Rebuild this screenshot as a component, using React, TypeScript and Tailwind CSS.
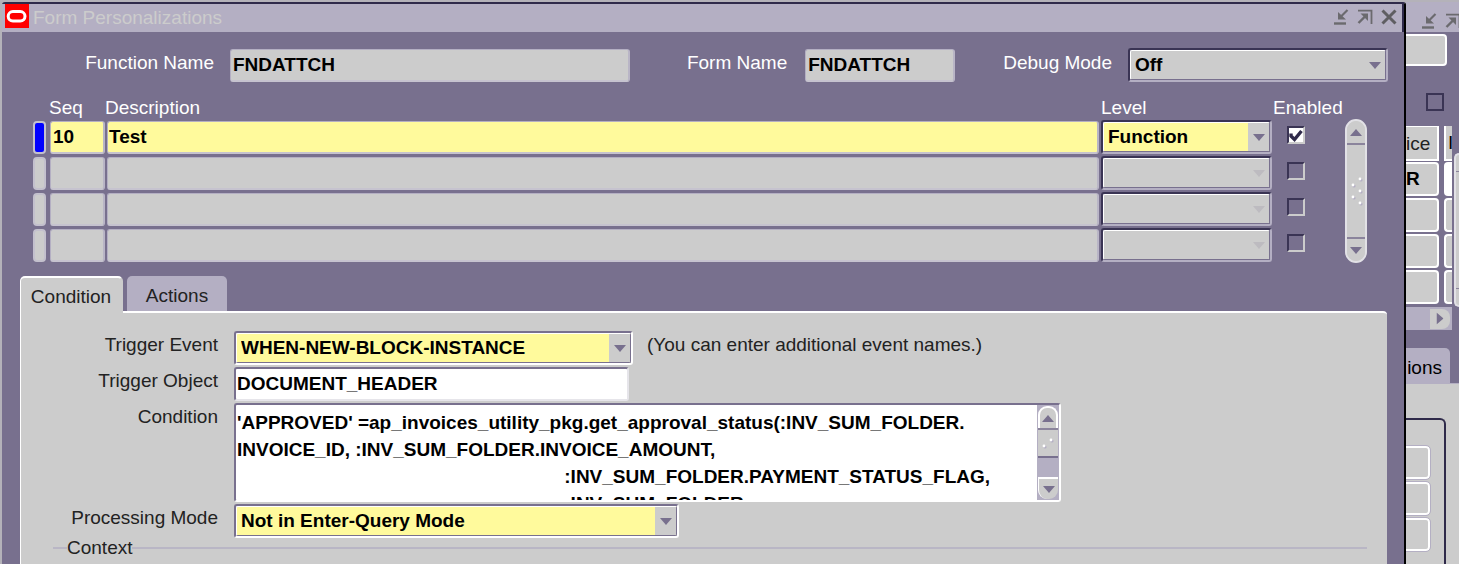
import { ReactNode } from 'react'
import clsx from 'clsx'

/* ─── Data ────────────────────────────────────────────────────────── */

const rules = [
    { seq: '10', description: 'Test', level: 'Function', enabled: true },
    { seq: '', description: '', level: '', enabled: false },
    { seq: '', description: '', level: '', enabled: false },
    { seq: '', description: '', level: '', enabled: false },
]

const indent = ' '.repeat(62)
const condition = [
    "'APPROVED' =ap_invoices_utility_pkg.get_approval_status(:INV_SUM_FOLDER.",
    'INVOICE_ID, :INV_SUM_FOLDER.INVOICE_AMOUNT,',
    `${indent}:INV_SUM_FOLDER.PAYMENT_STATUS_FLAG,`,
    `${indent}:INV_SUM_FOLDER.`,
].join('\n')

/* ─── Icons ───────────────────────────────────────────────────────── */

const OracleIcon = () => (
    <svg width={24} height={24} viewBox="0 0 24 24" className="flex-none" aria-hidden="true">
        <rect width="24" height="24" fill="#ff0000" />
        <rect x="3.2" y="7.6" width="16.8" height="9.4" rx="4.7" fill="none" stroke="#fff" strokeWidth={3} />
    </svg>
)
const MinimizeIcon = () => (
    <svg width={16} height={16} viewBox="0 0 16 16" fill="none" stroke="#6b6a6e" aria-hidden="true">
        <path d="M1 14.5h12" strokeWidth={2.4} /><path d="M14.5 1L7 8.5" strokeWidth={2.2} /><path d="M5 3v7.5h8z" fill="#6b6a6e" stroke="none" />
    </svg>
)
const RestoreIcon = () => (
    <svg width={16} height={16} viewBox="0 0 16 16" fill="none" stroke="#6b6a6e" aria-hidden="true">
        <path d="M1 1.7h13.5V15" strokeWidth={1.8} /><path d="M1.5 14L8 7.5" strokeWidth={2.4} /><path d="M3.5 4.5H11V12z" fill="#6b6a6e" stroke="none" />
    </svg>
)
const CloseIcon = () => (
    <svg width={16} height={16} viewBox="0 0 16 16" fill="none" stroke="#5f5e62" strokeWidth={3} aria-hidden="true">
        <path d="M1.5 1.5l13 13M14.5 1.5l-13 13" />
    </svg>
)
const Triangle = ({ className }: { className?: string }) => (
    <svg width={12} height={7} viewBox="0 0 12 7" className={className} fill="currentColor" aria-hidden="true">
        <path d="M0 0h12L6 7z" />
    </svg>
)
const Grip = ({ dots }: { dots: [number, number][] }) => (
    <svg width={16} height={32} viewBox="0 0 16 32" aria-hidden="true">
        {dots.map(([x, y]) => (
            <g key={`${x}-${y}`}>
                <circle cx={x + 1} cy={y + 1} r="1.6" fill="#b4afc3" />
                <circle cx={x} cy={y} r="1.4" fill="#fff" />
            </g>
        ))}
    </svg>
)

/* ─── Controls ────────────────────────────────────────────────────── */

const WindowButton = ({ label, children }: { label: string; children: ReactNode }) => (
    <button type="button" aria-label={label} className="flex-none">{children}</button>
)

type SelectProps = {
    id?: string
    label?: string
    value: string
    className: string
    filled?: boolean
    disabled?: boolean
    dark?: boolean
}

const Select = ({ id, label, value, className, filled, disabled, dark }: SelectProps) => (
    <div
        className={clsx(
            'relative h-[34px] rounded-[3px] border-2',
            dark ? 'border-t-[#3a3454] border-l-[#3a3454] border-b-[#b4afc3] border-r-[#b4afc3]' : 'border-t-[#78708e] border-l-[#78708e] border-b-white border-r-white',
            className,
        )}
    >
        <select
            id={id}
            aria-label={label}
            disabled={disabled}
            className={clsx(
                'block size-full appearance-none rounded-[2px] border border-t-white border-l-white border-b-[#78708e] border-r-[#78708e] pr-6 pl-1 font-bold text-black opacity-100',
                filled ? 'bg-[#fffa9c]' : 'bg-[#cccccc]',
            )}
        >
            <option>{value}</option>
        </select>
        <span className={clsx('pointer-events-none absolute inset-y-px right-px flex w-[21px] items-center justify-center bg-[#cccccc]', disabled ? 'text-[#bdbbc0]' : 'text-[#78708e]')}>
            <Triangle />
        </span>
    </div>
)

const Checkbox = ({ label, checked }: { label: string; checked: boolean }) => (
    <span className="relative block size-[18px]">
        <input
            type="checkbox"
            aria-label={label}
            defaultChecked={checked}
            className="peer block size-full appearance-none border-2 border-t-[#3a3454] border-l-[#3a3454] border-r-[#cccccc] border-b-[#cccccc] checked:bg-white"
        />
        <svg viewBox="0 0 18 18" className="pointer-events-none absolute inset-0 hidden peer-checked:block" fill="none" stroke="#2f2a4a" strokeWidth={3.4} aria-hidden="true">
            <path d="M4 7.5v2.5l3.5 3.5L14.5 5" />
        </svg>
    </span>
)

const readOnlyField = 'h-[33px] rounded-[3px] border border-t-[#b4afc3] border-l-[#b4afc3] border-r-2 border-b-2 border-r-[#b9b5c6] border-b-[#c6c3cf] font-bold text-black outline-none'

const ScrollCap = ({ down, className }: { down?: boolean; className: string }) => (
    <button
        type="button"
        aria-label={down ? 'Scroll down' : 'Scroll up'}
        className={clsx('flex h-[22px] flex-none items-center justify-center bg-[#cccccc] text-[#78708e]', className)}
    >
        <Triangle className={down ? '' : 'rotate-180'} />
    </button>
)

/* ─── Title bar ───────────────────────────────────────────────────── */

const TitleBar = () => (
    <header className="flex h-[28px] flex-none items-start border-r-2 border-r-[#2f2a4a] bg-[#b4afc3] pl-[3px]">
        <OracleIcon />
        <h1 className="flex-1 pl-1 leading-[27px] text-[#cccccc]">Form Personalizations</h1>
        <div className="flex gap-2 pt-[5px] pr-[5px]">
            <WindowButton label="Minimize"><MinimizeIcon /></WindowButton>
            <WindowButton label="Restore"><RestoreIcon /></WindowButton>
            <WindowButton label="Close"><CloseIcon /></WindowButton>
        </div>
    </header>
)

/* ─── Function details ────────────────────────────────────────────── */

const FunctionDetails = () => (
    <div className="flex flex-none pt-4 pr-4 text-white">
        <label htmlFor="function-name" className="w-[212px] flex-none pt-[3px] text-right">Function Name</label>
        <input id="function-name" readOnly value="FNDATTCH" className={clsx(readOnlyField, 'mt-px ml-4 w-[400px] bg-[#cccccc] pl-[2px]')} />
        <label htmlFor="form-name" className="ml-auto pt-[3px]">Form Name</label>
        <input id="form-name" readOnly value="FNDATTCH" className={clsx(readOnlyField, 'mt-px ml-[18px] w-[150px] bg-[#cccccc] pl-[2px]')} />
        <label htmlFor="debug-mode" className="ml-12 pt-[3px]">Debug Mode</label>
        <Select id="debug-mode" value="Off" dark className="ml-4 w-[260px]" />
    </div>
)

/* ─── Rules grid ──────────────────────────────────────────────────── */

const RulesGrid = () => (
    <div className="flex flex-none items-start pt-[14px] pl-[31px]">
        <table className="flex-1 table-fixed border-collapse">
            <colgroup>
                <col className="w-[16px]" />
                <col className="w-[56px]" />
                <col />
                <col className="w-[171px]" />
                <col className="w-[73px]" />
            </colgroup>
            <thead>
                <tr className="h-[23px] text-left text-white">
                    <td className="p-0" />
                    <th className="p-0 font-normal leading-[23px]">Seq</th>
                    <th className="p-0 font-normal leading-[23px]">Description</th>
                    <th className="p-0 font-normal leading-[23px]">Level</th>
                    <th className="p-0 pl-px font-normal leading-[23px]">Enabled</th>
                </tr>
            </thead>
            <tbody>
                {rules.map((rule, i) => {
                    const fill = rule.enabled ? 'bg-[#fffa9c]' : 'bg-[#cccccc]'
                    return (
                        <tr key={i} className="h-9">
                            <td className="p-0">
                                <button
                                    type="button"
                                    aria-label={`Select row ${i + 1}`}
                                    className={clsx('block h-[33px] w-[13px] rounded-[4px] border-2 border-[#c3c0cd]', rule.enabled ? 'bg-[#0000ff]' : 'bg-[#cccccc]')}
                                />
                            </td>
                            <td className="p-0">
                                <input aria-label="Seq" defaultValue={rule.seq} className={clsx(readOnlyField, fill, 'ml-px block w-[55px] pl-[2px]')} />
                            </td>
                            <td className="p-0 pr-[2px] pl-[2px]">
                                <input aria-label="Description" defaultValue={rule.description} className={clsx(readOnlyField, fill, 'block w-full pl-px')} />
                            </td>
                            <td className="p-0">
                                <Select label="Level" value={rule.level} filled={rule.enabled} disabled={!rule.enabled} dark className="w-full" />
                            </td>
                            <td className="p-0 pb-1 pl-[15px]">
                                <Checkbox label="Enabled" checked={rule.enabled} />
                            </td>
                        </tr>
                    )
                })}
            </tbody>
        </table>
        <div className="mt-[23px] mr-[37px] flex h-[144px] w-[22px] flex-none flex-col rounded-full border-2 border-[#e2e1e6] bg-[#cccccc]">
            <ScrollCap className="rounded-t-full" />
            <div className="flex flex-1 items-center justify-center border-y-2 border-t-[#8b849c] border-b-[#8b849c]">
                <Grip dots={[[12, 4], [5, 10], [12, 16], [5, 22], [12, 28]]} />
            </div>
            <ScrollCap down className="rounded-b-full" />
        </div>
    </div>
)

/* ─── Condition tab ───────────────────────────────────────────────── */

const FieldRow = ({ id, label, children }: { id: string; label: string; children: ReactNode }) => (
    <div className="flex">
        <label htmlFor={id} className="w-[197px] flex-none pt-[2px] text-right">{label}</label>
        <div className="ml-4 flex min-w-0 flex-1">{children}</div>
    </div>
)

const ConditionPanel = () => (
    <section className="mr-[17px] min-h-0 flex-1 rounded-tr-[4px] border-t-2 border-l border-white bg-[#cccccc] pt-[18px] text-[#222222]">
        <div className="flex flex-col gap-[2px]">
            <FieldRow id="trigger-event" label="Trigger Event">
                <Select id="trigger-event" value="WHEN-NEW-BLOCK-INSTANCE" filled className="w-[399px]" />
                <p className="ml-[14px] pt-[2px]">(You can enter additional event names.)</p>
            </FieldRow>
            <FieldRow id="trigger-object" label="Trigger Object">
                <input
                    id="trigger-object"
                    defaultValue="DOCUMENT_HEADER"
                    className="h-[34px] w-[395px] rounded-[3px] border-2 border-t-[#78708e] border-l-[#78708e] border-r-[#e6e5ea] border-b-[#e6e5ea] bg-white pl-px font-bold text-black"
                />
            </FieldRow>
            <FieldRow id="condition" label="Condition">
                <div className="flex h-[99px] w-[827px] rounded-[3px] border-2 border-t-[#78708e] border-l-[#78708e] border-r-white border-b-white bg-white">
                    <textarea
                        id="condition"
                        wrap="off"
                        defaultValue={condition}
                        className="block min-w-0 flex-1 resize-none overflow-hidden pt-[4px] pl-px leading-[27px] font-bold text-black outline-none"
                    />
                    <div className="flex w-[22px] flex-none flex-col bg-[#b4afc3] px-px py-px">
                        <ScrollCap className="rounded-t-[9px] border-2 border-b-0 border-white" />
                        <div className="h-[30px] overflow-hidden border-y-2 border-t-[#8b849c] border-b-[#78708e] bg-[#cccccc] pl-px">
                            <Grip dots={[[12, 10], [5, 16]]} />
                        </div>
                        <div className="flex-1" />
                        <ScrollCap down className="rounded-b-[9px] border-t-2 border-l border-white" />
                    </div>
                </div>
            </FieldRow>
            <FieldRow id="processing-mode" label="Processing Mode">
                <Select id="processing-mode" value="Not in Enter-Query Mode" filled className="w-[445px]" />
            </FieldRow>
        </div>
        <fieldset className="mr-5 ml-8 h-7 border-t-2 border-[#b9b6c5]">
            <legend className="ml-[14px] leading-5">Context</legend>
        </fieldset>
    </section>
)

const Tabs = () => (
    <div className="flex min-h-0 flex-1 flex-col pt-[13px] pl-[18px]">
        <nav className="flex flex-none text-[#222222]">
            <button type="button" className="relative -mb-[2px] h-[37px] w-[103px] rounded-t-[5px] border-2 border-b-0 border-l border-white border-r-[#cccccc] bg-[#cccccc] pt-[3px]">Condition</button>
            <button type="button" className="ml-1 h-[35px] w-[100px] rounded-t-[5px] bg-[#b4afc3] pt-[5px]">Actions</button>
        </nav>
        <ConditionPanel />
    </div>
)

/* ─── Window behind ───────────────────────────────────────────────── */

const BackgroundWindow = () => (
    <aside className="flex w-[53px] flex-none flex-col overflow-hidden border-t-2 border-[#b4b2b9] bg-[#78708e]">
        <div className="flex h-[30px] flex-none gap-2 bg-[#b4afc3] pt-[7px] pl-[15px]">
            <WindowButton label="Minimize"><MinimizeIcon /></WindowButton>
            <WindowButton label="Restore"><RestoreIcon /></WindowButton>
        </div>
        <input aria-label="Value" className="mt-[2px] h-[32px] w-[41px] flex-none rounded-r-[4px] border-2 border-l-0 border-white bg-[#cccccc]" />
        <input type="checkbox" aria-label="Flag" className="mt-[27px] ml-5 size-[18px] flex-none appearance-none border-2 border-[#3a3454]" />
        <div className="mt-[14px] flex items-start">
            <table className="w-[46px] flex-none table-fixed border-collapse">
                <thead>
                    <tr className="h-9">
                        <th className="w-[38px] p-0 font-normal">
                            <span className="block h-[35px] w-[33px] border-t border-r-2 border-b-2 border-white bg-[#cccccc] text-left leading-[34px] text-[#222222]">ice</span>
                        </th>
                        <th className="p-0 font-normal">
                            <span className="block h-[35px] overflow-hidden border-l-2 border-b-2 border-white bg-[#cccccc] pl-[2px] text-left leading-[34px]">I</span>
                        </th>
                    </tr>
                </thead>
                <tbody>
                    {['R', '', '', ''].map((value, i) => (
                        <tr key={i} className="h-9">
                            <td className="p-0">
                                <span className="block h-[34px] w-[33px] rounded-r-[4px] border-2 border-l-0 border-white bg-[#cccccc] leading-[30px] font-bold">{value}</span>
                            </td>
                            <td className="p-0">
                                <span className={clsx('block h-[34px] rounded-l-[4px] border-2 border-r-0 border-white', i === 0 ? 'bg-white' : 'bg-[#cccccc]')} />
                            </td>
                        </tr>
                    ))}
                </tbody>
            </table>
            <div className="mt-[28px] ml-[2px] h-[154px] flex-1 rounded-l-[8px] border-2 border-r-0 border-[#e2e1e6] bg-[#cccccc] pt-4">
                <div className="h-[118px] border-y border-[#8b849c]" />
            </div>
        </div>
        <div className="flex h-[23px] w-[46px] flex-none items-center justify-end bg-[#b4afc3]">
            <button type="button" aria-label="Scroll right" className="mr-[2px] flex h-5 w-5 items-center justify-center rounded-r-[8px] bg-[#cccccc] text-[#78708e]">
                <Triangle className="-rotate-90" />
            </button>
        </div>
        <button type="button" className="mt-[18px] h-[35px] w-[44px] flex-none overflow-hidden rounded-tr-[5px] bg-[#b4afc3] pt-[4px] pr-2 text-right text-black">ions</button>
        <div className="min-h-0 flex-1 border-t border-[#b4afc3] bg-[#cccccc] pt-[34px]">
            <div className="flex h-full w-[40px] flex-col gap-[3px] rounded-tr-[6px] border-t-2 border-r-2 border-[#2f2a4a] pt-[26px]">
                {['one', 'two', 'three'].map(name => (
                    <input key={name} aria-label={`Line ${name}`} className="h-[33px] w-[24px] flex-none rounded-r-[4px] border-2 border-l-0 border-white bg-[#cccccc] outline outline-[#b4afc3]" />
                ))}
            </div>
        </div>
    </aside>
)

/* ─── Page ────────────────────────────────────────────────────────── */

const App = () => (
    <div className="flex h-screen overflow-hidden bg-[#b4b2b9] font-['Liberation_Sans',Arial,sans-serif] text-[19px] leading-6">
        <main className="mt-[2px] ml-[2px] flex min-w-0 flex-1 flex-col rounded-t-[3px] border-t-2 border-r-2 border-t-[#2f2a4a] border-r-black bg-[#78708e]">
            <TitleBar />
            <FunctionDetails />
            <RulesGrid />
            <Tabs />
        </main>
        <BackgroundWindow />
    </div>
)

export default App
